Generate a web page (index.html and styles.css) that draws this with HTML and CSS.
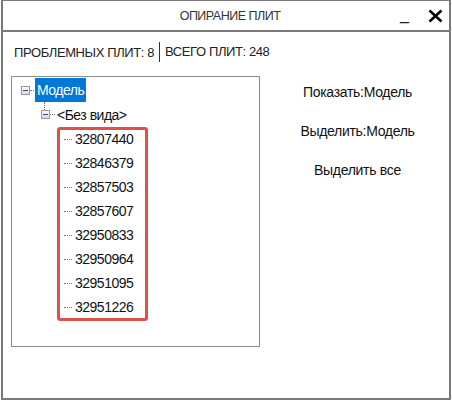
FILE: index.html
```html
<!DOCTYPE html>
<html>
<head>
    <title>Опирание плит</title>
    <link rel="stylesheet" href="styles.css">
</head>
<body>
    <div class="window">
        <div class="titlebar">
            <span class="title">ОПИРАНИЕ ПЛИТ</span>
            <span class="btn-min">_</span>
            <svg class="btn-close" width="15" height="14" viewBox="0 0 15 14">
                <path d="M1.5 1.5 L13.5 12.5 M13.5 1.5 L1.5 12.5" stroke="#000" stroke-width="2.6" fill="none"/>
            </svg>
        </div>
        <div class="summary">
            <span class="summary-part">ПРОБЛЕМНЫХ ПЛИТ: 8</span>
            <span class="summary-part summary-sep">ВСЕГО ПЛИТ: 248</span>
        </div>
        <div class="content">
            <div class="tree">
                <div class="row row-root">
                    <span class="expander"></span>
                    <span class="hline hline-short"></span>
                    <span class="label selected">Модель</span>
                </div>
                <div class="row row-view">
                    <span class="expander expander-linked"></span>
                    <span class="hline hline-view"></span>
                    <span class="label">&lt;Без вида&gt;</span>
                </div>
                <div class="children">
                    <div class="row row-leaf"><span class="hline hline-leaf"></span><span class="label">32807440</span></div>
                    <div class="row row-leaf"><span class="hline hline-leaf"></span><span class="label">32846379</span></div>
                    <div class="row row-leaf"><span class="hline hline-leaf"></span><span class="label">32857503</span></div>
                    <div class="row row-leaf"><span class="hline hline-leaf"></span><span class="label">32857607</span></div>
                    <div class="row row-leaf"><span class="hline hline-leaf"></span><span class="label">32950833</span></div>
                    <div class="row row-leaf"><span class="hline hline-leaf"></span><span class="label">32950964</span></div>
                    <div class="row row-leaf"><span class="hline hline-leaf"></span><span class="label">32951095</span></div>
                    <div class="row row-leaf"><span class="hline hline-leaf"></span><span class="label">32951226</span></div>
                    <div class="highlight-box"></div>
                </div>
            </div>
            <div class="actions">
                <button class="action">Показать:Модель</button>
                <button class="action">Выделить:Модель</button>
                <button class="action">Выделить все</button>
            </div>
        </div>
    </div>
</body>
</html>
```

FILE: styles.css
```css
body {
    margin: 0;
    background: #fff;
    font-family: 'Liberation Sans', Arial, sans-serif;
    color: #111;
}
.window {
    box-sizing: border-box;
    width: 450px;
    height: 400px;
    margin-left: 1px;
    border: 2px solid #7a7a7a;
    border-top-width: 1px;
    background: #fff;
}
.titlebar {
    position: relative;
    height: 29px;
    border-bottom: 2px solid #7a7a7a;
    display: flex;
    align-items: center;
    justify-content: center;
}
.title {
    font-size: 12.5px;
    letter-spacing: -0.5px;
    color: #333;
    margin-top: 1px;
    margin-left: 8px;
}
.btn-min {
    position: absolute;
    left: 397px;
    top: 5px;
    font-size: 16px;
    color: #222;
}
.btn-close {
    position: absolute;
    left: 425px;
    top: 8px;
}
.summary {
    display: flex;
    align-items: center;
    height: 20px;
    padding: 10px 0 0 11px;
    font-size: 13px;
    letter-spacing: -0.4px;
    color: #222;
}
.summary-sep {
    border-left: 1px solid #333;
    margin-left: 5px;
    padding-left: 5px;
    height: 20px;
    line-height: 20px;
}
.content {
    display: flex;
    margin-top: 14px;
    padding-left: 8px;
}
.tree {
    box-sizing: border-box;
    width: 249px;
    height: 271px;
    border: 1px solid #8c8c8c;
    padding-top: 1px;
}
.row {
    display: flex;
    align-items: center;
    height: 24px;
    font-size: 14px;
    letter-spacing: -0.5px;
}
.row-root {
    padding-left: 9px;
}
.row-view {
    height: 25px;
    padding-left: 29px;
}
.row-leaf {
    padding-left: 52px;
    height: 24px;
}
.expander {
    position: relative;
    box-sizing: border-box;
    width: 9px;
    height: 9px;
    border: 1px solid #9a9a9a;
    background: linear-gradient(#fcfcfc, #d9d9d9);
}
.expander::after {
    content: "";
    position: absolute;
    left: 1px;
    top: 3px;
    width: 5px;
    height: 1px;
    background: #2f4f86;
}
.expander-linked::before {
    content: "";
    position: absolute;
    left: 2px;
    top: -9px;
    height: 8px;
    border-left: 1px dotted #777;
}
.hline {
    height: 0;
    border-top: 1px dotted #777;
}
.hline-short {
    width: 4px;
    margin-right: 1px;
}
.hline-view {
    width: 5px;
    margin-right: 2px;
}
.hline-leaf {
    width: 8px;
    margin-right: 3px;
}
.label {
    white-space: nowrap;
}
.selected {
    background: #0078d7;
    color: #fff;
    height: 24px;
    line-height: 24px;
    padding: 0 2px;
}
.children {
    position: relative;
}
.highlight-box {
    position: absolute;
    left: 45px;
    top: 0;
    width: 91px;
    height: 194px;
    box-sizing: border-box;
    border: 3px solid #d9534b;
    border-radius: 3px;
}
.actions {
    flex: 1;
    display: flex;
    flex-direction: column;
    align-items: center;
    padding-top: 4px;
    padding-left: 6px;
    gap: 15px;
}
.action {
    height: 24px;
    border: none;
    background: none;
    padding: 0;
    font-family: 'Liberation Sans', Arial, sans-serif;
    font-size: 14px;
    letter-spacing: -0.3px;
    color: #111;
}
```
